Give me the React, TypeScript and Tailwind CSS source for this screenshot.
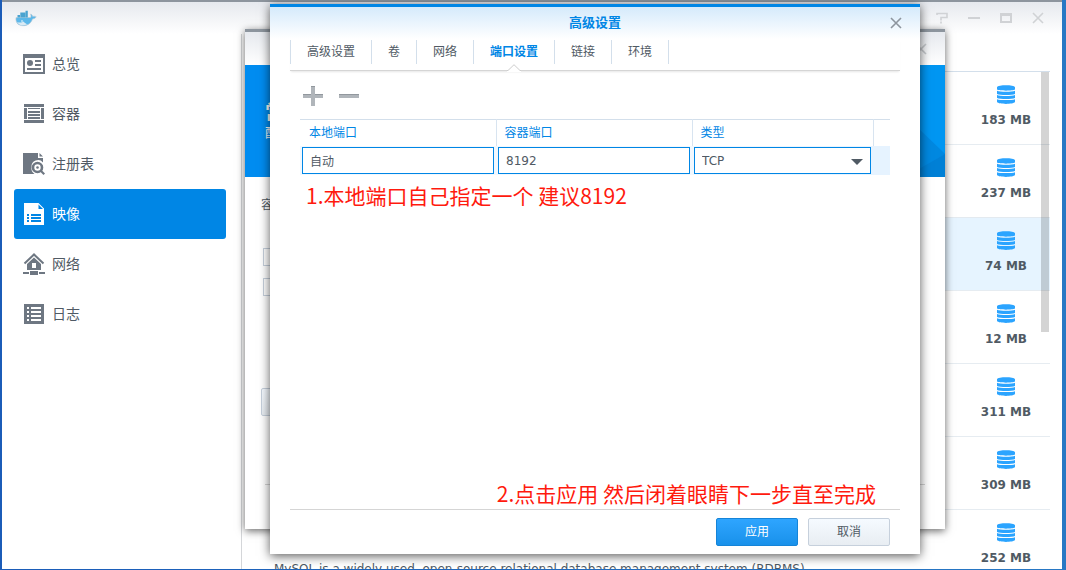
import type { ReactNode } from 'react';

type NavItem = {
  label: string;
  icon: ReactNode;
  active?: boolean;
};

const navItems: NavItem[] = [
  {
    label: '总览',
    icon: (
      <path
        fillRule="evenodd"
        d="M0 1h22v20H0zM2 5v14h18V5zM12 7h6v2h-6zM12 11h6v2h-6zM4 15h14v2H4zM4 10a3 3 0 1 0 6 0a3 3 0 1 0 -6 0z"
      />
    ),
  },
  {
    label: '容器',
    icon: (
      <path d="M1 1h20v3H1zM1 17h20v3H1zM1 5h3v11H1zM18 5h3v11h-3zM5 5h12v1H5zM5 8h12v2H5zM5 11h12v2H5zM5 14h12v2H5z" />
    ),
  },
  {
    label: '注册表',
    icon: (
      <>
        <path d="M0 0h15v5h5v4.500a6.500 6.500 0 0 0 -11.500 4.500a7 7 0 0 0 3 7H0zM16.500 0L20 3.500h-3.500z" />
        <circle cx="14.500" cy="14.500" r="4.500" fill="none" stroke="currentColor" strokeWidth="2.600" />
        <circle cx="14.500" cy="14.500" r="1.300" />
        <path d="M17 18.500l1.500 -1.500l3.500 3.500l-1.500 1.500z" />
      </>
    ),
  },
  {
    label: '映像',
    active: true,
    icon: (
      <path
        fillRule="evenodd"
        d="M1 0h14.500L21 5.500V22H1zM15.500 1.500V6H20zM4 11v2h2v-2zM8 11v2h10v-2zM4 14v2h2v-2zM8 14v2h10v-2zM4 17v2h2v-2zM8 17v2h10v-2z"
      />
    ),
  },
  {
    label: '网络',
    icon: (
      <>
        <path d="M1.500 10.500L11 1.500L20.500 10.500" fill="none" stroke="currentColor" strokeWidth="2" />
        <path fillRule="evenodd" d="M11 4.500L18 11v6H4v-6zM9 10v5h4v-5zM0 19h6v2H0zM16 19h6v2h-6zM7 18h8v4H7z" />
      </>
    ),
  },
  {
    label: '日志',
    icon: (
      <path
        fillRule="evenodd"
        d="M1 1h20v20H1zM4 4v2h2V4zM8 4v2h10V4zM4 8v2h2V8zM8 8v2h10V8zM4 12v2h2v-2zM8 12v2h10v-2zM4 16v2h2v-2zM8 16v2h10v-2z"
      />
    ),
  },
];

const images = [
  { size: '183 MB' },
  { size: '237 MB' },
  { size: '74 MB', selected: true },
  { size: '12 MB' },
  { size: '311 MB' },
  { size: '309 MB' },
  { size: '252 MB' },
];

const tabs = ['高级设置', '卷', '网络', '端口设置', '链接', '环境'];
const activeTab = '端口设置';

function CloseIcon() {
  return (
    <svg width="12" height="12" viewBox="0 0 12 12" stroke="currentColor" strokeWidth="1.600" aria-hidden="true">
      <path d="M1 1l10 10M11 1L1 11" />
    </svg>
  );
}

function DockerLogo() {
  return (
    <svg width="22" height="17" viewBox="0 0 22 17" aria-hidden="true">
      <path
        d="M1 7.500h14.500c.8 -1 .3 -2.500 0 -3.500c1.500 .3 2 1.500 2.300 2.400c1.300 -.4 2.400 -.2 3.400 .3c-.7 1.600 -2.200 2.100 -3.600 2.200C16 13.500 12.500 15.700 8 15.700C3 15.700 .3 12.500 1 7.500z"
        fill="#5cb8ea"
        stroke="#c3ccd3"
        strokeWidth=".6"
      />
      <path d="M2.500 5h2.500v2.500H2.500zM5.300 2.500h5v5h-5zM10.500 .7h2.300v6.800h-2.300z" fill="#4aa3d0" />
      <path d="M2 12c3 1 5 .5 6.500 -.5c1 1.500 3 2.500 4 2.700c-4 2 -8.500 1.500 -10.500 -2.200z" fill="#d9eaf4" />
      <circle cx="7" cy="11" r=".8" fill="#fff" />
    </svg>
  );
}

function DatabaseIcon() {
  return (
    <svg width="18" height="19" viewBox="0 0 18 19" fill="#2ba4ff" aria-hidden="true">
      <path d="M0 2.200C1 -.4 17 -.4 18 2.200V4.500C16 6 2 6 0 4.500zM0 5.700C3 7 15 7 18 5.700V9C15 10.300 3 10.300 0 9zM0 10C3 11.300 15 11.300 18 10V13C15 14.300 3 14.300 0 13zM0 14.200C3 15.400 15 15.400 18 14.200V17C16 19.500 2 19.500 0 17z" />
    </svg>
  );
}

function Sidebar() {
  return (
    <nav className="w-60 shrink-0 border-r border-[#d4d6d9] pt-[5px] pr-[15px] pl-3">
      {navItems.map((item) => (
        <a
          key={item.label}
          href="#"
          className={
            item.active
              ? 'flex h-[50px] items-center gap-[7px] rounded-[3px] bg-[#0086e5] pl-[9px] text-sm text-white'
              : 'flex h-[50px] items-center gap-[7px] rounded-[3px] pl-[9px] text-sm text-[#505a64]'
          }
        >
          <svg
            width="22"
            height="22"
            viewBox="0 0 22 22"
            fill="currentColor"
            className={item.active ? 'text-white' : 'text-[#6e7782]'}
            aria-hidden="true"
          >
            {item.icon}
          </svg>
          {item.label}
        </a>
      ))}
    </nav>
  );
}

function ImageList() {
  return (
    <main className="relative min-w-0 flex-1 overflow-hidden pt-[37px] pr-3 pl-5">
      <ul>
        {images.map((image) => (
          <li
            key={image.size}
            className={
              image.selected
                ? 'flex h-[73px] justify-end border-t border-[#e3eaf0] bg-[#e6f4ff] pr-[14px]'
                : 'flex h-[73px] justify-end border-t border-[#e6ecf1] pr-[14px] first:border-[#d3dfeb]'
            }
          >
            <div className="flex w-[60px] flex-col items-center gap-1.5 pt-[13px]">
              <DatabaseIcon />
              <span className="text-xs leading-5 font-bold text-[#505a64]">{image.size}</span>
            </div>
          </li>
        ))}
      </ul>
      <p className="absolute top-[527px] left-8 text-xs leading-4 whitespace-nowrap text-[#505a64]">
        MySQL is a widely used, open-source relational database management system (RDBMS)
      </p>
      <div className="absolute top-[38px] right-[13px] h-[260px] w-2 bg-black/17" />
    </main>
  );
}

function WizardWindow() {
  return (
    <section className="absolute top-[29px] right-[121px] bottom-[41px] left-[245px] flex flex-col border-t-[3px] border-[#8d959e] bg-white shadow-[0_2px_8px_rgba(0,0,0,0.6)]">
      <header className="flex h-[33px] shrink-0 items-center justify-end bg-linear-to-b from-[#e6e9ee] to-white pr-[18px] text-[#c6c9cd]">
        <button type="button" aria-label="关闭向导">
          <CloseIcon />
        </button>
      </header>
      <div className="relative h-28 shrink-0 overflow-hidden bg-[#008cf0] pt-9 pl-5 text-white">
        <svg className="absolute top-0 right-0" width="60" height="112" viewBox="0 0 60 112" aria-hidden="true">
          <path d="M0 0h60v89L36 66L0 30z" fill="#0096f2" />
          <path d="M35 65L60 89L35 104z" fill="#0088e0" />
          <path d="M60 89v23H20z" fill="#0080d6" />
        </svg>
        <h2 className="text-xl leading-6 font-bold">常规设置</h2>
        <p className="text-[13px] leading-4">配置</p>
      </div>
      <div className="flex flex-1 flex-col items-start pt-5 pl-4 text-xs text-[#505a64]">
        <p className="leading-4">容器名称</p>
        <div className="flex flex-col gap-3 pt-[35px] pl-0.5">
          <input type="text" aria-label="容器名称" className="h-[18px] w-24 border border-[#c6d0dc]" />
          <input type="text" aria-label="资源限制" className="h-[18px] w-24 border border-[#c6d0dc]" />
        </div>
        <button
          type="button"
          aria-label="高级设置"
          className="mt-[92px] h-7 w-24 rounded-[2px] border border-[#c6d0dc] bg-linear-to-b from-[#f5faff] to-[#e8edf2]"
        />
      </div>
      <footer className="mx-5 h-[45px] shrink-0 border-t border-[#d5d5d5]" />
    </section>
  );
}

function PortTable() {
  return (
    <table className="w-full table-fixed border-t border-[#d3dfeb] text-left text-xs">
      <colgroup>
        <col className="w-[196px]" />
        <col className="w-[196px]" />
        <col className="w-[181px]" />
        <col />
      </colgroup>
      <thead>
        <tr className="h-[26px] text-[#0086e5]">
          <th scope="col" className="border-r border-[#d8e4f0] pl-[9px] font-normal">
            <span id="local-port">本地端口</span>
          </th>
          <th scope="col" className="border-r border-[#d8e4f0] pl-2 font-normal">
            <span id="container-port">容器端口</span>
          </th>
          <th scope="col" className="border-r border-[#d8e4f0] pl-2 font-normal">
            <span id="port-type">类型</span>
          </th>
          <td />
        </tr>
      </thead>
      <tbody>
        <tr className="h-[29px] bg-[#e6f3ff] text-[#505a64]">
          <td className="bg-[#f2f8fe] px-0.5">
            <input
              type="text"
              aria-labelledby="local-port"
              defaultValue="自动"
              className="block h-[27px] w-full border border-[#0086e5] bg-white px-[7px]"
            />
          </td>
          <td className="bg-[#f2f8fe] px-0.5">
            <input
              type="text"
              aria-labelledby="container-port"
              defaultValue="8192"
              className="block h-[27px] w-full border border-[#0086e5] bg-white px-[7px] pt-px"
            />
          </td>
          <td className="bg-linear-to-r from-[#f2f8fe] to-[#e6f3ff] px-0.5">
            <div className="relative">
              <select
                aria-labelledby="port-type"
                defaultValue="TCP"
                className="block h-[27px] w-full appearance-none border border-[#0086e5] bg-white px-[7px] pt-px"
              >
                <option>TCP</option>
                <option>UDP</option>
              </select>
              <svg
                className="pointer-events-none absolute top-3 right-2"
                width="12"
                height="6"
                viewBox="0 0 12 6"
                fill="#505a64"
                aria-hidden="true"
              >
                <path d="M0 0h12L6 6z" />
              </svg>
            </div>
          </td>
          <td />
        </tr>
      </tbody>
    </table>
  );
}

function SettingsDialog() {
  return (
    <section
      role="dialog"
      aria-labelledby="dialog-title"
      className="absolute top-1 right-[146px] bottom-4 left-[270px] flex flex-col border-t-[3px] border-[#0086e5] bg-white shadow-[0_2px_10px_rgba(0,0,0,0.65)]"
    >
      <header className="relative flex h-8 shrink-0 items-center justify-center bg-linear-to-b from-[#d5eafb] to-white">
        <h1 id="dialog-title" className="text-[13px] font-bold text-[#0086e5]">
          高级设置
        </h1>
        <button type="button" aria-label="关闭" className="absolute right-[18px] text-[#8d959e]">
          <CloseIcon />
        </button>
      </header>
      <div className="flex flex-1 flex-col px-5">
        <div
          role="tablist"
          className="flex h-8 border-b border-[#d5d5d5] pt-px shadow-[0_2px_2px_-1px_rgba(0,0,0,0.1)]"
        >
          {tabs.map((tab) => (
            <button
              key={tab}
              type="button"
              role="tab"
              aria-selected={tab === activeTab}
              className={
                tab === activeTab
                  ? 'relative h-6 border-r border-[#d3dfeb] px-4 text-xs font-bold text-[#0086e5]'
                  : 'h-6 border-r border-[#d3dfeb] px-4 text-xs text-[#505a64] first:border-l'
              }
            >
              {tab}
              {tab === activeTab ? (
                <svg
                  className="absolute top-6 left-1/2 -translate-x-1/2"
                  width="14"
                  height="8"
                  viewBox="0 0 14 8"
                  aria-hidden="true"
                >
                  <path d="M0 8V6.500L7 .7L14 6.500V8z" fill="#fff" />
                  <path d="M0 6.500h1L7 .7L13 6.500h1" fill="none" stroke="#cdcdcd" />
                </svg>
              ) : null}
            </button>
          ))}
        </div>

        <div className="flex flex-1 flex-col px-2.5">
          <div className="flex h-12 items-center gap-4 pt-0.5 pl-[3px] text-[#b0b5ba]">
            <button type="button" aria-label="新增">
              <svg width="20" height="20" viewBox="0 0 20 20" fill="currentColor" aria-hidden="true">
                <path d="M8 0h4v8h8v4h-8v8H8v-8H0V8h8z" />
                <path d="M0 8h8v1H0zM12 8h8v1h-8zM8 0h4v1H8z" fill="#92989e" />
              </svg>
            </button>
            <button type="button" aria-label="删除">
              <svg width="20" height="20" viewBox="0 0 20 20" fill="currentColor" aria-hidden="true">
                <path d="M0 8h20v4H0z" />
                <path d="M0 8h20v1H0z" fill="#92989e" />
              </svg>
            </button>
          </div>
          <PortTable />
          <p className="mt-1 pl-1.5 font-['Noto_Sans_CJK_SC',sans-serif] text-[21px] leading-8 text-[#ff1a0e]">
            1.本地端口自己指定一个 建议8192
          </p>
        </div>

        <p className="pr-6 pb-0.5 text-right font-['Noto_Sans_CJK_SC',sans-serif] text-[21px] leading-7 text-[#ff1a0e]">
          2.点击应用 然后闭着眼睛下一步直至完成
        </p>
        <footer className="flex h-[45px] shrink-0 justify-end gap-2.5 border-t border-[#d5d5d5] pt-2 pr-2.5 text-xs">
          <button
            type="button"
            className="h-7 w-[82px] rounded-[2px] border border-[#1584d8] bg-linear-to-b from-[#2ea5ff] to-[#1891ea] text-white"
          >
            应用
          </button>
          <button
            type="button"
            className="h-7 w-[82px] rounded-[2px] border border-[#c6d0dc] bg-linear-to-b from-[#f5faff] to-[#e8edf2] text-[#505a64]"
          >
            取消
          </button>
        </footer>
      </div>
    </section>
  );
}

export default function App() {
  return (
    <div className="relative flex h-screen overflow-hidden bg-linear-to-r from-[#1b5cb8] to-[#2878c4] pr-1 pb-px pl-0.5 font-['DejaVu_Sans','Noto_Sans_CJK_SC',sans-serif]">
      <div className="flex min-w-0 flex-1 flex-col border-t-2 border-[#8d959e] bg-white">
        <header className="flex h-8 shrink-0 items-center justify-between bg-linear-to-b from-[#e6e9ee] to-white pr-[18px] pl-[13px]">
          <DockerLogo />
          <div className="flex items-center gap-5 text-[#d0d2d5]">
            <button type="button" aria-label="帮助">
              <svg width="12" height="12" viewBox="0 0 12 12" aria-hidden="true">
                <path d="M1 3V1.500h10V5.500H5v3M5 9.500v2" fill="none" stroke="currentColor" strokeWidth="1.600" />
              </svg>
            </button>
            <button type="button" aria-label="最小化">
              <svg width="12" height="12" viewBox="0 0 12 12" fill="currentColor" aria-hidden="true">
                <path d="M0 5h12v2H0z" />
              </svg>
            </button>
            <button type="button" aria-label="最大化">
              <svg width="12" height="12" viewBox="0 0 12 12" fill="currentColor" aria-hidden="true">
                <path fillRule="evenodd" d="M0 1h12v10H0zM2 4v5h8V4z" />
              </svg>
            </button>
            <button type="button" aria-label="关闭窗口">
              <CloseIcon />
            </button>
          </div>
        </header>
        <div className="flex min-h-0 flex-1">
          <Sidebar />
          <ImageList />
        </div>
      </div>
      <WizardWindow />
      <SettingsDialog />
    </div>
  );
}
